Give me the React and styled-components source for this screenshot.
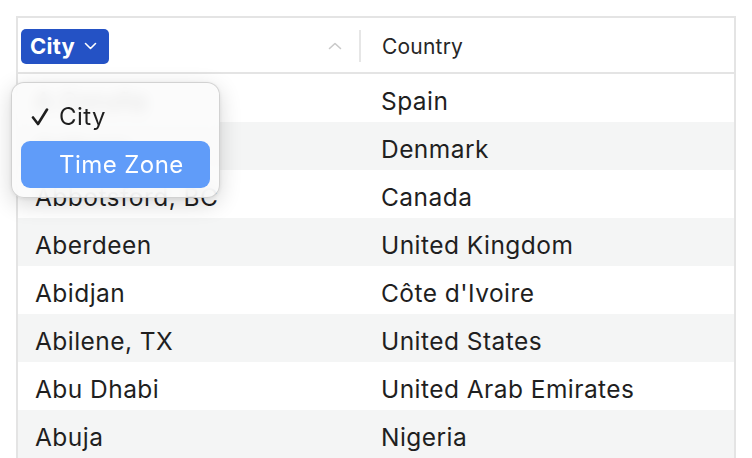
import React from "react";
import styled, { createGlobalStyle } from "styled-components";

const Global = createGlobalStyle`
  html, body { margin: 0; padding: 0; background: #ffffff; }
  body { font-family: Inter, "Noto Sans", "Liberation Sans", sans-serif; -webkit-font-smoothing: antialiased; }
`;

const Page = styled.div`
  width: 752px;
  height: 458px;
  overflow: hidden;
  padding: 16px 16px 0 16px;
  box-sizing: border-box;
  position: relative;
`;

const Table = styled.div`
  border: 2px solid #e4e4e4;
  border-bottom: none;
  display: flex;
  flex-direction: column;
`;

const HeaderRow = styled.div`
  display: grid;
  grid-template-columns: 343px 1fr;
  height: 54px;
  border-bottom: 2px solid #e4e4e4;
`;

const HeaderCell = styled.div`
  display: flex;
  align-items: center;
  padding: ${(p) => (p.$first ? "0 0 0 3px" : "2px 0 0 21px")};
  position: relative;
  font-size: 21px;
  letter-spacing: 0.2px;
  color: #262626;
`;

const ColumnButton = styled.button`
  display: flex;
  align-items: center;
  gap: 9px;
  height: 35px;
  margin-top: 3px;
  padding: 0 12px 1px 9px;
  border: none;
  border-radius: 5px;
  background: #2452c5;
  color: #ffffff;
  font-family: inherit;
  font-size: 22px;
  font-weight: 700;
  letter-spacing: 0.2px;
`;

const SortArrow = styled.svg`
  margin-left: auto;
  margin-right: 17px;
  margin-top: 2px;
`;

const Separator = styled.div`
  width: 2px;
  height: 32px;
  margin-top: 2px;
  background: #e6e6e6;
`;

const Row = styled.div`
  display: grid;
  grid-template-columns: 343px 1fr;
  height: 48px;
  align-items: center;
  background: ${(p) => (p.$alt ? "#f4f5f5" : "#ffffff")};
  font-size: 24.5px;
  letter-spacing: 0.45px;
  color: #1f1f1f;
`;

const Cell = styled.div`
  padding-top: 5px;
  padding-left: ${(p) => (p.$first ? "17px" : "20px")};
  white-space: nowrap;
`;

const Menu = styled.div`
  position: absolute;
  left: 11px;
  top: 82px;
  width: 209px;
  height: 116px;
  box-sizing: border-box;
  padding: 14px 9px 9px 9px;
  border-radius: 13px;
  background: rgba(250, 250, 250, 0.88);
  backdrop-filter: blur(7px);
  border: 1px solid rgba(0, 0, 0, 0.16);
  box-shadow: 0 6px 22px rgba(0, 0, 0, 0.16), 0 1px 4px rgba(0, 0, 0, 0.08);
  display: flex;
  flex-direction: column;
  gap: 4px;
`;

const MenuItem = styled.div`
  display: flex;
  align-items: center;
  height: ${(p) => (p.$active ? "48px" : "40px")};
  padding-left: 10px;
  border-radius: 9px;
  background: ${(p) => (p.$active ? "#609cf9" : "transparent")};
  color: ${(p) => (p.$active ? "#ffffff" : "#1f1f1f")};
  font-size: 24px;
  letter-spacing: 0.45px;
`;

const CheckSlot = styled.span`
  width: 28px;
  display: flex;
  align-items: center;
`;

const rows = [
  ["A Coruña", "Spain"],
  ["Aalborg", "Denmark"],
  ["Abbotsford, BC", "Canada"],
  ["Aberdeen", "United Kingdom"],
  ["Abidjan", "Côte d'Ivoire"],
  ["Abilene, TX", "United States"],
  ["Abu Dhabi", "United Arab Emirates"],
  ["Abuja", "Nigeria"],
];

export default function App() {
  return (
    <>
      <Global />
      <Page>
        <Table>
          <HeaderRow>
            <HeaderCell $first>
              <ColumnButton>
                City
                <svg width="13" height="8" viewBox="0 0 13 8">
                  <path d="M1.5 1.5 L6.5 6.5 L11.5 1.5" fill="none" stroke="#fff" strokeWidth="1.6" strokeLinecap="round" strokeLinejoin="round" />
                </svg>
              </ColumnButton>
              <SortArrow width="14" height="8" viewBox="0 0 14 8">
                <path d="M1.5 6.5 L7 1.5 L12.5 6.5" fill="none" stroke="#c9c9c9" strokeWidth="1.6" strokeLinecap="round" strokeLinejoin="round" />
              </SortArrow>
              <Separator />
            </HeaderCell>
            <HeaderCell>Country</HeaderCell>
          </HeaderRow>
          {rows.map(([city, country], i) => (
            <Row key={city} $alt={i % 2 === 1}>
              <Cell $first>{city}</Cell>
              <Cell>{country}</Cell>
            </Row>
          ))}
        </Table>
        <Menu>
          <MenuItem>
            <CheckSlot>
              <svg width="18" height="18" viewBox="0 0 18 18">
                <path d="M2 9.5 L7 16 L16 1.5" fill="none" stroke="#1f1f1f" strokeWidth="2.6" strokeLinecap="round" strokeLinejoin="round" />
              </svg>
            </CheckSlot>
            City
          </MenuItem>
          <MenuItem $active>
            <CheckSlot />
            Time Zone
          </MenuItem>
        </Menu>
      </Page>
    </>
  );
}
